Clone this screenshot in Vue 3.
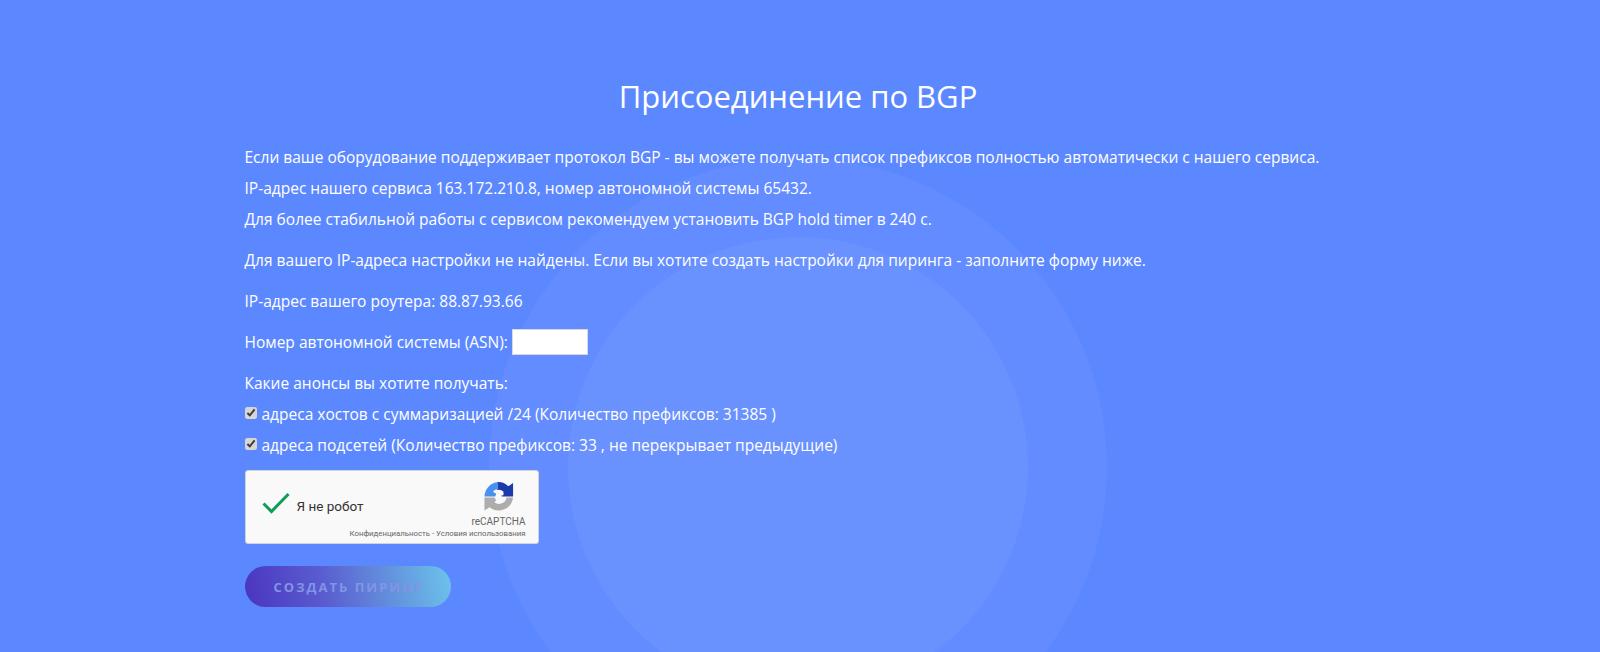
<script setup>
const intro = [
  'Если ваше оборудование поддерживает протокол BGP - вы можете получать список префиксов полностью автоматически с нашего сервиса.',
  'IP-адрес нашего сервиса 163.172.210.8, номер автономной системы 65432.',
  'Для более стабильной работы с сервисом рекомендуем установить BGP hold timer в 240 с.'
]
const options = [
  'адреса хостов с суммаризацией /24 (Количество префиксов: 31385 )',
  'адреса подсетей (Количество префиксов: 33 , не перекрывает предыдущие)'
]
</script>

<template>
  <main class="page">
    <div class="ring ring-outer"></div>
    <div class="ring ring-inner"></div>
    <section class="container">
      <h1 class="title">Присоединение по BGP</h1>
      <div class="block">
        <p v-for="line in intro" :key="line" class="line">{{ line }}</p>
      </div>
      <p class="line gap">Для вашего IP-адреса настройки не найдены. Если вы хотите создать настройки для пиринга - заполните форму ниже.</p>
      <p class="line gap">IP-адрес вашего роутера: 88.87.93.66</p>
      <label class="line gap asn">Номер автономной системы (ASN):<input class="asn-input" type="text" /></label>
      <p class="line gap">Какие анонсы вы хотите получать:</p>
      <label v-for="o in options" :key="o" class="line option">
        <input class="check" type="checkbox" checked />{{ o }}
      </label>
      <div class="captcha">
        <svg class="tick" viewBox="0 0 28 22" width="28" height="22">
          <path d="M1.5 11.5 L9.5 19.5 L26.5 2" fill="none" stroke="#0f9d58" stroke-width="3" />
        </svg>
        <span class="captcha-label">Я не робот</span>
        <svg class="logo" viewBox="0 0 32 32" width="30" height="31">
          <path d="M14 0.5 A15.5 15.5 0 0 1 26 5 L31 1.5 V16 H17 L21 11 A8 8 0 0 0 14 9 Z" fill="#1c3aa9" />
          <path d="M15 0.5 L15 8 A7 7 0 0 0 9.5 11 L13 13 L12 16 H0.5 A16 16 0 0 1 15 0.5 Z" fill="#4a90ee" />
          <path d="M0.5 17 H11 L13 20 L11 22 A8 8 0 0 0 24 17 H31 A15.5 15.5 0 0 1 6 27.5 L0.5 31 Z" fill="#adadad" />
          <circle cx="16" cy="16.5" r="3" fill="#f9f9f9" />
          <circle cx="19" cy="13" r="2" fill="#f9f9f9" />
        </svg>
        <span class="captcha-brand">reCAPTCHA</span>
        <span class="captcha-links">Конфиденциальность - Условия использования</span>
      </div>
      <button class="submit" type="button" disabled>Создать пиринг</button>
    </section>
  </main>
</template>

<style scoped>
.page {
  position: relative;
  height: 652px;
  overflow: hidden;
  background: #5c88ff;
  color: #fff;
  font-family: "Open Sans", "Noto Sans", sans-serif;
  font-size: 15.53px;
}
.ring {
  position: absolute;
  border-radius: 50%;
  left: 50%;
}
.ring-outer {
  width: 618px;
  height: 618px;
  margin-left: -311px;
  top: 158px;
  background: #628cff;
}
.ring-inner {
  width: 460px;
  height: 460px;
  margin-left: -232px;
  top: 237px;
  background: #6a92ff;
}
.container {
  position: relative;
  width: 1107px;
  margin-left: 244.5px;
  padding-top: 74px;
}
.title {
  margin: 0 0 24px;
  text-align: center;
  font-size: 31px;
  font-weight: 400;
  line-height: 44px;
}
.line {
  display: block;
  margin: 0;
  line-height: 31px;
  white-space: nowrap;
}
.gap {
  margin-top: 10px;
}
.asn {
  display: flex;
  align-items: center;
}
.asn-input {
  width: 76px;
  height: 26px;
  margin: 0 0 1px 4px;
  box-sizing: border-box;
  border: 1px solid #d9d9d9;
  background: #fff;
}
.option {
  display: flex;
  align-items: center;
}
.check {
  width: 12px;
  height: 12px;
  margin: 0 5px 3px 0;
  accent-color: #d6d6d6;
}
.captcha {
  position: relative;
  width: 294px;
  height: 74px;
  margin-top: 9px;
  box-sizing: border-box;
  border: 1px solid #d3d3d3;
  border-radius: 3px;
  background: #f9f9f9;
  color: #333;
  font-family: Roboto, "Liberation Sans", sans-serif;
}
.tick {
  position: absolute;
  left: 16px;
  top: 21px;
}
.captcha-label {
  position: absolute;
  left: 51px;
  top: 27px;
  font-size: 13.5px;
  line-height: 16px;
}
.logo {
  position: absolute;
  left: 238px;
  top: 10px;
}
.captcha-brand {
  position: absolute;
  right: 12px;
  top: 45px;
  font-size: 10px;
  line-height: 12px;
  color: #666;
}
.captcha-links {
  position: absolute;
  right: 12px;
  top: 58px;
  font-size: 7.8px;
  line-height: 10px;
  color: #666;
}
.submit {
  display: block;
  width: 206px;
  height: 41px;
  margin-top: 22px;
  border: 0;
  border-radius: 21px;
  background: linear-gradient(78deg, #4a35c0 0%, #5a5ccf 38%, #6cc4ea 100%);
  color: #8294e6;
  font-family: inherit;
  font-size: 13px;
  font-weight: 700;
  letter-spacing: 2px;
  text-transform: uppercase;
  text-align: left;
  padding: 0 0 0 29px;
}
</style>
